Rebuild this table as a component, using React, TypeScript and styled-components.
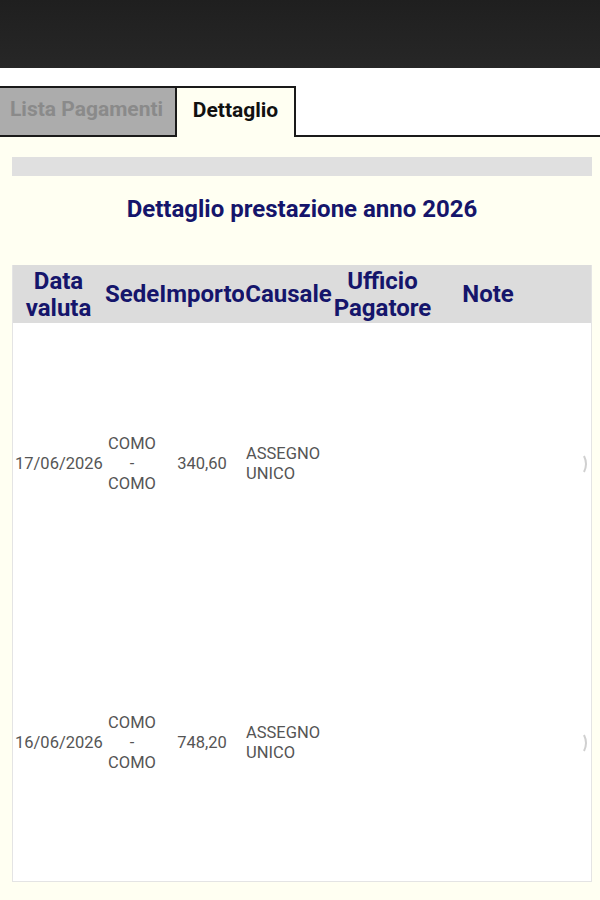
import React from "react";
import styled, { createGlobalStyle } from "styled-components";

const Global = createGlobalStyle`
  html, body { margin: 0; padding: 0; background: #fffff2; }
  body { font-family: Roboto, "Liberation Sans", sans-serif; }
  * { box-sizing: border-box; }
`;

const Page = styled.div`
  width: 600px;
  min-height: 900px;
  display: flex;
  flex-direction: column;
  background: #fffff2;
  overflow: hidden;
`;

const TopBar = styled.div`
  height: 68px;
  background: linear-gradient(180deg, #1f1f1f 0%, #272727 100%);
`;

const TabStrip = styled.div`
  background: #ffffff;
  padding-top: 18px;
  display: flex;
  align-items: flex-end;
`;

const Tab = styled.div<{ $active?: boolean }>`
  height: 51px;
  display: flex;
  align-items: center;
  justify-content: ${(p) => (p.$active ? "center" : "flex-start")};
  padding: 0 0 5px ${(p) => (p.$active ? "0" : "10px")};
  font-weight: 700;
  font-size: 21px;
  border: 2px solid #1a1a1a;
  border-bottom: ${(p) => (p.$active ? "none" : "2px solid #1a1a1a")};
  background: ${(p) => (p.$active ? "#fffff2" : "#acacac")};
  color: ${(p) => (p.$active ? "#111" : "#8a8a8a")};
  width: ${(p) => (p.$active ? "121px" : "179px")};
  margin-left: -2px;
  white-space: nowrap;
`;

const TabFill = styled.div`
  flex: 1;
  height: 2px;
  background: #1a1a1a;
`;

const Content = styled.div`
  padding: 20px 8px 0 12px;
  display: flex;
  flex-direction: column;
`;

const GrayBar = styled.div`
  height: 19px;
  background: #e0e0e0;
`;

const Title = styled.h2`
  margin: 0;
  padding: 19px 0 0;
  height: 89px;
  text-align: center;
  font-size: 24px;
  font-weight: 700;
  color: #15156b;
`;

const Table = styled.div`
  display: grid;
  grid-template-columns: 91px 56px 84px 89px 99px 112px 1fr;
  border: 1px solid #e4e4e4;
  border-top: none;
  background: #ffffff;
`;

const HeadCell = styled.div`
  background: #dcdcdc;
  height: 58px;
  display: flex;
  align-items: center;
  justify-content: center;
  text-align: center;
  font-size: 24px;
  font-weight: 700;
  line-height: 27px;
  color: #15156b;
  white-space: nowrap;
  padding-top: 1px;
`;

const Cell = styled.div<{ $align?: "left" | "center"; $pad?: number }>`
  height: 279px;
  display: flex;
  align-items: center;
  justify-content: ${(p) => (p.$align === "left" ? "flex-start" : "center")};
  text-align: ${(p) => (p.$align === "left" ? "left" : "center")};
  padding-left: ${(p) => p.$pad ?? 0}px;
  padding-top: 2px;
  font-size: 16.5px;
  line-height: 20px;
  color: #555555;
  position: relative;
  white-space: nowrap;
`;

const Edge = styled.svg`
  position: absolute;
  right: 2px;
  top: 50%;
  margin-top: -8px;
`;

const rows = [
  { date: "17/06/2026", amount: "340,60" },
  { date: "16/06/2026", amount: "748,20" },
];

export default function App() {
  return (
    <Page>
      <Global />
      <TopBar />
      <TabStrip>
        <Tab>Lista Pagamenti</Tab>
        <Tab $active>Dettaglio</Tab>
        <TabFill />
      </TabStrip>
      <Content>
        <GrayBar />
        <Title>Dettaglio prestazione anno 2026</Title>
        <Table>
          <HeadCell>
            Data
            <br />
            valuta
          </HeadCell>
          <HeadCell>Sede</HeadCell>
          <HeadCell>Importo</HeadCell>
          <HeadCell>Causale</HeadCell>
          <HeadCell>
            Ufficio
            <br />
            Pagatore
          </HeadCell>
          <HeadCell>Note</HeadCell>
          <HeadCell />
          {rows.map((r) => (
            <React.Fragment key={r.date}>
              <Cell $align="left" $pad={2}>{r.date}</Cell>
              <Cell>
                COMO
                <br />-<br />
                COMO
              </Cell>
              <Cell>{r.amount}</Cell>
              <Cell $align="left" $pad={2}>
                ASSEGNO
                <br />
                UNICO
              </Cell>
              <Cell />
              <Cell />
              <Cell>
                <Edge width="6" height="18" viewBox="0 0 6 18">
                  <path d="M1 1 Q5 9 1 17" stroke="#d0d0d0" strokeWidth="2" fill="none" />
                </Edge>
              </Cell>
            </React.Fragment>
          ))}
        </Table>
      </Content>
    </Page>
  );
}
